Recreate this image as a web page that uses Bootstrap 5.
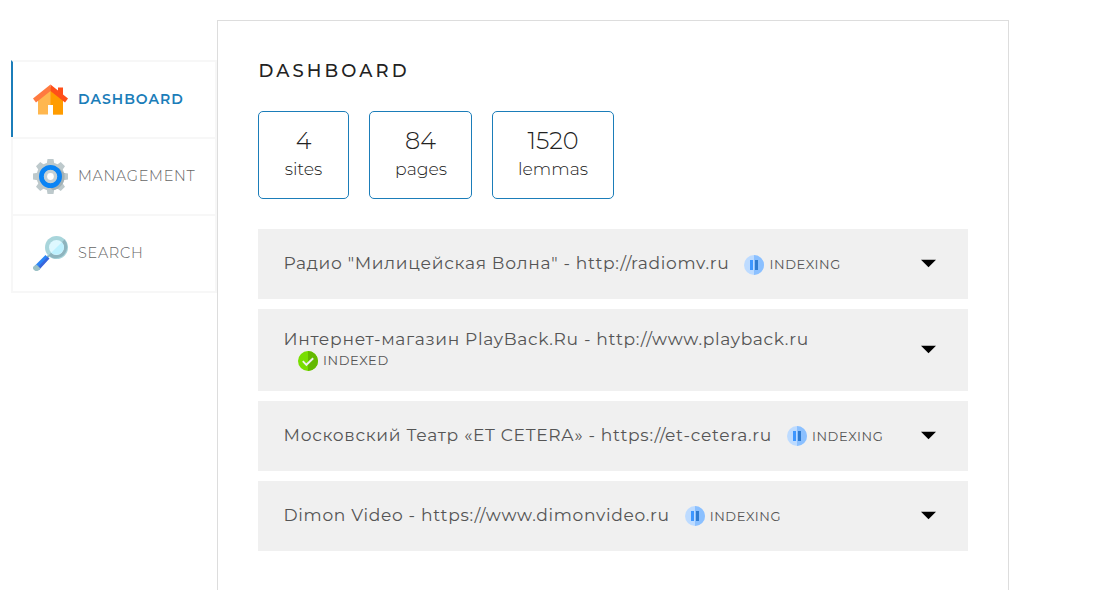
<!DOCTYPE html>
<html lang="ru">
<head>
<meta charset="utf-8">
<meta name="viewport" content="width=device-width, initial-scale=1">
<title>Dashboard</title>
<link rel="stylesheet" href="https://cdn.jsdelivr.net/npm/bootstrap@5.3.0/dist/css/bootstrap.min.css">
<style>
body{font-family:Montserrat,Inter,"Open Sans",sans-serif;color:#222;background:#fff;height:590px;overflow:hidden}
.side{width:206px;margin:60px 0 0 11px;border:2px solid #f7f7f7;border-top:0}
.side .side-link{height:77px;border-top:2px solid #f7f7f7;padding-left:20px;font-size:14.5px;letter-spacing:.7px;font-weight:300;color:#666;text-decoration:none;white-space:nowrap}
.side .side-link.active{color:#1b7db9;font-size:14px;letter-spacing:1.02px;font-weight:600;margin-left:-2px;border-left:2px solid #1b7db9}
.side svg{width:35px;height:35px;margin-right:10px;flex:none}
.panel{width:792px;height:570px;margin-top:20px;border:1px solid #ddd;border-bottom:0;padding:40px}
h1{font-size:18px;font-weight:500;line-height:20px;letter-spacing:3.1px;margin:0 0 30px;padding-left:.4px}
.stats{gap:20px}
.stat{height:88px;border:1px solid #1b7db9;border-radius:5px;padding:13px 25px 0}
.stat-num{font-size:24px;line-height:31px;font-weight:300}
.stat-label{font-size:17.3px;line-height:26px;font-weight:300}
.w-sites{width:91px}.w-pages{width:103px}.w-lemmas{width:122px}
.sites{gap:10px;margin-top:30px}
.site{height:70px;background:#f0f0f0;padding:0 32px 2px 25.5px;color:#555}
.site.tall{height:82px}
.site-title{font-size:17.1px;line-height:22px;white-space:nowrap;letter-spacing:.68px}
.state{font-size:13px;line-height:20px;letter-spacing:.6px;white-space:nowrap;margin:2px 0 0 15px}
.tall .state{height:20px;margin:1px 0 0 14.5px}
.tall .site-title{line-height:21px}
.state svg{width:20px;height:20px;margin-right:5px}
.site:nth-child(-n+2) .state svg{margin-top:1px}
</style>
</head>
<body>
<svg width="0" height="0" class="position-absolute">
<symbol id="pause" viewBox="0 0 20 20"><circle cx="10" cy="10" r="10" fill="#bddbff"/><path d="M10 0a10 10 0 0 1 0 20z" fill="#8bc0ff"/><path d="M6 5h3v10H6z" fill="#3d96ff"/><path d="M11 5h3v10h-3z" fill="#2f7bd0"/></symbol>
<symbol id="check" viewBox="0 0 20 20"><circle cx="10" cy="10" r="10" fill="#78de00"/><path d="M10 0a10 10 0 0 1 0 20z" fill="#64b900"/><path d="M4.800 10.200l3.600 3.600L15.200 7.200" fill="none" stroke="#f0f0f0" stroke-width="1.900"/></symbol>
<symbol id="caret" viewBox="0 0 15 9"><path d="M0 .8h15L7.500 8.300z" fill="#000"/></symbol>
</svg>
<div class="d-flex align-items-start">
<nav class="side d-flex flex-column flex-shrink-0">
<a href="#" class="side-link active d-flex align-items-center">
<svg viewBox="0 0 35 35"><path d="M5 15L17.500 5 30 15v17.500H20v-9.500h-5v9.500H5z" fill="#ffb74f"/><path d="M17.500 5L30 15v17.500H20v-9.500h-2.500z" fill="#ff9c00"/><path d="M17.500 2.500L0 16.500 3 20.500l14.500-11.500z" fill="#ff7a40"/><path d="M17.500 2.500L25 8.500V5.500h5V12.500l5 4-3 4L17.500 9z" fill="#ff4f19"/></svg>
<span>DASHBOARD</span></a>
<a href="#" class="side-link d-flex align-items-center">
<svg viewBox="0 0 35 35"><g fill="#bdc9cc"><path id="tooth" d="M14.500 0h6l1 6h-8zM13.500 29h8l-1 6h-6z"/><use href="#tooth" transform="rotate(45 17.500 17.500)"/><use href="#tooth" transform="rotate(90 17.500 17.500)"/><use href="#tooth" transform="rotate(135 17.500 17.500)"/><circle cx="17.500" cy="17.500" r="14"/></g><path d="M26 9l5.300 5.300A14 14 0 0 1 20 31.300L12 25z" fill="#a3b1b5"/><circle cx="17.500" cy="17.500" r="9" fill="none" stroke="#0a84f5" stroke-width="5"/><circle cx="17.500" cy="17.500" r="5" fill="none" stroke="#c4d0d5" stroke-width="3.500"/><circle cx="17.500" cy="17.500" r="3.400" fill="#fff"/></svg>
<span>MANAGEMENT</span></a>
<a href="#" class="side-link d-flex align-items-center">
<svg viewBox="0 0 35 35"><path d="M13.500 20.500l2-2 1.500 1.500-2 2z" fill="#8eb4bd"/><path d="M1.500 30L12.500 19l3.500 3.500L5.500 33.500z" fill="#2b85f7"/><path d="M4 32L14.500 21l2 1.500L6 34z" fill="#3865db"/><path d="M3.500 28.500l4 4-2 2Q3 36 1 34q-2-2-.5-3.500z" fill="#9bc1c5"/><circle cx="23.500" cy="11.500" r="11.500" fill="#a8d5db"/><path d="M31.600 3.400A11.500 11.500 0 0 1 15.400 19.600z" fill="#8eb4be"/><circle cx="23.500" cy="11.500" r="7.500" fill="#def8ff"/><path d="M28.800 6.200A7.500 7.500 0 0 1 18.200 16.800z" fill="#bdf1ff"/></svg>
<span>SEARCH</span></a>
</nav>
<main class="panel flex-shrink-0">
<h1>DASHBOARD</h1>
<div class="stats d-flex text-center">
<div class="stat w-sites"><div class="stat-num">4</div><div class="stat-label">sites</div></div>
<div class="stat w-pages"><div class="stat-num">84</div><div class="stat-label">pages</div></div>
<div class="stat w-lemmas"><div class="stat-num">1520</div><div class="stat-label">lemmas</div></div>
</div>
<div class="sites d-flex flex-column">
<div class="site d-flex align-items-center"><div class="site-title">Радио "Милицейская Волна" - http://radiomv.ru</div><div class="state d-flex"><svg><use href="#pause"/></svg>INDEXING</div><svg class="ms-auto" width="15" height="9"><use href="#caret"/></svg></div>
<div class="site tall d-flex align-items-center"><div><div class="site-title">Интернет-магазин PlayBack.Ru - http://www.playback.ru</div><div class="state d-flex"><svg><use href="#check"/></svg>INDEXED</div></div><svg class="ms-auto" width="15" height="9"><use href="#caret"/></svg></div>
<div class="site d-flex align-items-center"><div class="site-title">Московский Театр «ET CETERA» - https://et-cetera.ru</div><div class="state d-flex"><svg><use href="#pause"/></svg>INDEXING</div><svg class="ms-auto" width="15" height="9"><use href="#caret"/></svg></div>
<div class="site d-flex align-items-center"><div class="site-title">Dimon Video - https://www.dimonvideo.ru</div><div class="state d-flex"><svg><use href="#pause"/></svg>INDEXING</div><svg class="ms-auto" width="15" height="9"><use href="#caret"/></svg></div>
</div>
</main>
</div>
<script src="https://cdn.jsdelivr.net/npm/bootstrap@5.3.0/dist/js/bootstrap.bundle.min.js"></script>
</body>
</html>
